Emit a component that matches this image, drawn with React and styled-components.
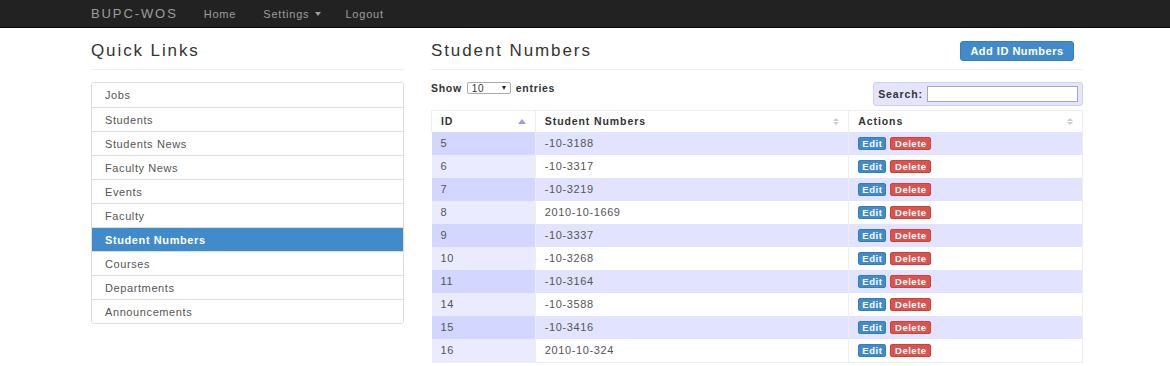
import React from "react";
import styled, { createGlobalStyle } from "styled-components";

const GlobalStyle = createGlobalStyle`
  body {
    margin: 0;
    background: #fff;
    font-family: "Liberation Sans", Arial, sans-serif;
    color: #333;
  }
`

const Navbar = styled.div`
  height: 28px;
  background: #222;
  border-bottom: 1px solid #080808;
  box-sizing: border-box;
`

const Container = styled.div`
  width: 992px;
  margin-left: 91px;
  display: flex;
  align-items: center;
  height: 100%;
`

const Brand = styled.span`
  color: #9d9d9d;
  font-size: 13px;
  letter-spacing: 1.9px;
  margin-right: 26px;
`

const NavLink = styled.span`
  color: #9d9d9d;
  font-size: 11px;
  letter-spacing: 0.8px;
  margin-right: ${p => p.$mr || 27}px;
  display: flex;
  align-items: center;
`

const Caret = styled.span`
  display: inline-block;
  margin-left: 6px;
  border-top: 4px solid #9d9d9d;
  border-left: 3.5px solid transparent;
  border-right: 3.5px solid transparent;
`

const Page = styled.div`
  width: 992px;
  margin-left: 91px;
  display: flex;
  gap: 27px;
  align-items: flex-start;
`

const Sidebar = styled.div`
  width: 313px;
`

const Main = styled.div`
  flex: 1;
`

const PageHeader = styled.div`
  display: flex;
  align-items: center;
  justify-content: space-between;
  height: 42px;
  padding-top: 5px;
  box-sizing: border-box;
  border-bottom: 1px solid #eee;
  margin-bottom: 12px;
`

const Title = styled.h1`
  margin: 0;
  font-size: 17px;
  font-weight: 500;
  letter-spacing: 1.9px;
  color: #333;
`

const PrimaryButton = styled.button`
  background: #428bca;
  border: 1px solid #357ebd;
  border-radius: 3px;
  color: #fff;
  font-family: inherit;
  font-size: 11px;
  font-weight: bold;
  letter-spacing: 0.5px;
  width: 114px;
  height: 20px;
  padding: 0;
  margin-right: 9px;
`

const ListGroup = styled.div`
  border: 1px solid #ddd;
  border-radius: 3px;
  overflow: hidden;
`

const ListItem = styled.div`
  height: 24px;
  box-sizing: border-box;
  display: flex;
  align-items: center;
  padding-left: 13px;
  font-size: 11px;
  letter-spacing: 0.6px;
  color: ${p => (p.$active ? "#fff" : "#555")};
  background: ${p => (p.$active ? "#428bca" : "#fff")};
  font-weight: ${p => (p.$active ? "bold" : "normal")};
  & + & {
    border-top: 1px solid #ddd;
  }
`

const Toolbar = styled.div`
  display: flex;
  justify-content: space-between;
  align-items: flex-start;
  height: 28px;
`

const Length = styled.div`
  display: flex;
  align-items: center;
  gap: 5px;
  font-size: 10.5px;
  font-weight: bold;
  letter-spacing: 0.7px;
`

const FakeSelect = styled.div`
  width: 44px;
  height: 12px;
  box-sizing: border-box;
  border: 1px solid #aaa;
  border-radius: 2px;
  display: flex;
  align-items: center;
  justify-content: space-between;
  padding: 0 4px;
  font-size: 10px;
  font-weight: normal;
  background: #fff;
`

const SelectArrow = styled.span`
  border-top: 4px solid #222;
  border-left: 2.5px solid transparent;
  border-right: 2.5px solid transparent;
`

const SearchBox = styled.div`
  width: 210px;
  height: 24px;
  box-sizing: border-box;
  background: #e4e5fb;
  border: 1px solid #cfd1f2;
  border-radius: 3px;
  display: flex;
  align-items: center;
  justify-content: flex-end;
  padding-right: 4px;
  gap: 4px;
  font-size: 10.5px;
  font-weight: bold;
  letter-spacing: 0.9px;
`

const SearchInput = styled.div`
  width: 151px;
  height: 16px;
  box-sizing: border-box;
  border: 1px solid #aaa;
  background: #fff;
`

const Table = styled.table`
  width: 652px;
  border-collapse: collapse;
  font-size: 11px;
  letter-spacing: 0.6px;
  border-bottom: 1px solid #eee;
  border-right: 1px solid #eee;
`

const Th = styled.th`
  height: 21px;
  padding: 0 9px;
  text-align: left;
  font-size: 10.5px;
  font-weight: bold;
  letter-spacing: 0.9px;
  color: #333;
  border-top: 1px solid #eee;
  border-left: 1px solid #eee;
  width: ${p => p.$w}px;
  box-sizing: border-box;
`

const ThInner = styled.div`
  display: flex;
  align-items: center;
  justify-content: space-between;
`

const SortUp = styled.span`
  border-bottom: 5px solid #9a9ce6;
  border-left: 4px solid transparent;
  border-right: 4px solid transparent;
`

const SortBoth = styled.span`
  display: flex;
  flex-direction: column;
  gap: 1px;
  &::before, &::after {
    content: "";
    border-left: 3px solid transparent;
    border-right: 3px solid transparent;
  }
  &::before { border-bottom: 3px solid #ccc; }
  &::after { border-top: 3px solid #ccc; }
`

const Td = styled.td`
  height: 23px;
  padding: 0 9px;
  color: #555;
  border-left: ${p => (p.$first ? "none" : "1px solid #eee")};
  background: ${p =>
    p.$odd ? (p.$sorted ? "#d3d6ff" : "#e2e4ff") : (p.$sorted ? "#eaebff" : "#fff")};
`

const ActionButton = styled.span`
  display: inline-flex;
  align-items: center;
  justify-content: center;
  height: 13px;
  width: ${p => p.$w}px;
  border-radius: 2px;
  color: #fff;
  font-size: 9.5px;
  font-weight: bold;
  letter-spacing: 0.5px;
  margin-right: 4px;
  vertical-align: middle;
  background: ${p => (p.$danger ? "#d9534f" : "#428bca")};
  border: 1px solid ${p => (p.$danger ? "#d43f3a" : "#357ebd")};
  box-sizing: border-box;
`

const links = [
  "Jobs", "Students", "Students News", "Faculty News", "Events",
  "Faculty", "Student Numbers", "Courses", "Departments", "Announcements",
]

const rows = [
  [5, "-10-3188"], [6, "-10-3317"], [7, "-10-3219"], [8, "2010-10-1669"],
  [9, "-10-3337"], [10, "-10-3268"], [11, "-10-3164"], [14, "-10-3588"],
  [15, "-10-3416"], [16, "2010-10-324"],
]

const App = () => {
  return (
    <>
      <GlobalStyle />
      <Navbar>
        <Container>
          <Brand>BUPC-WOS</Brand>
          <NavLink>Home</NavLink>
          <NavLink $mr={24}>Settings<Caret /></NavLink>
          <NavLink>Logout</NavLink>
        </Container>
      </Navbar>
      <Page>
        <Sidebar>
          <PageHeader>
            <Title>Quick Links</Title>
          </PageHeader>
          <ListGroup>
            {links.map(l => (
              <ListItem key={l} $active={l === "Student Numbers"}>{l}</ListItem>
            ))}
          </ListGroup>
        </Sidebar>
        <Main>
          <PageHeader>
            <Title>Student Numbers</Title>
            <PrimaryButton>Add ID Numbers</PrimaryButton>
          </PageHeader>
          <Toolbar>
            <Length>
              Show
              <FakeSelect>10<SelectArrow /></FakeSelect>
              entries
            </Length>
            <SearchBox>
              Search:
              <SearchInput />
            </SearchBox>
          </Toolbar>
          <Table>
            <thead>
              <tr>
                <Th $w={104}><ThInner>ID<SortUp /></ThInner></Th>
                <Th $w={314}><ThInner>Student Numbers<SortBoth /></ThInner></Th>
                <Th $w={234}><ThInner>Actions<SortBoth /></ThInner></Th>
              </tr>
            </thead>
            <tbody>
              {rows.map(([id, num], i) => (
                <tr key={id}>
                  <Td $first $sorted $odd={i % 2 === 0}>{id}</Td>
                  <Td $odd={i % 2 === 0}>{num}</Td>
                  <Td $odd={i % 2 === 0}>
                    <ActionButton $w={28}>Edit</ActionButton>
                    <ActionButton $w={41} $danger>Delete</ActionButton>
                  </Td>
                </tr>
              ))}
            </tbody>
          </Table>
        </Main>
      </Page>
    </>
  )
}

export default App
